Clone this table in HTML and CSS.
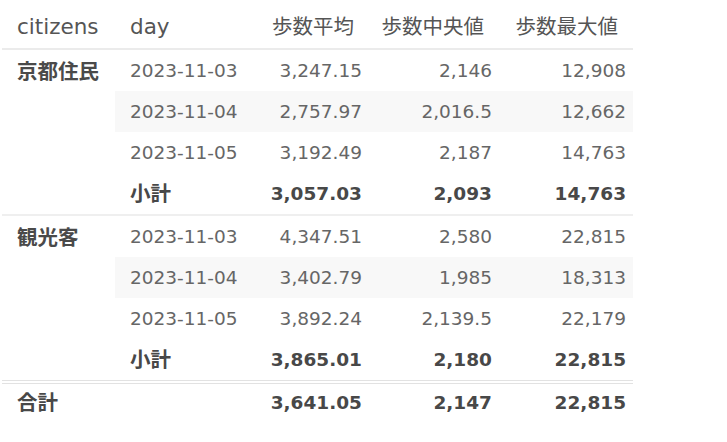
FILE: index.html
```html
<!DOCTYPE html>
<html lang="ja">
<head>
<meta charset="utf-8">
<title>歩数集計</title>
<link rel="stylesheet" href="styles.css">
</head>
<body>
<table class="summary">
  <colgroup>
    <col class="c-cit"><col class="c-day"><col class="c-avg"><col class="c-med"><col class="c-max">
  </colgroup>
  <thead>
    <tr>
      <th class="txt">citizens</th>
      <th class="txt">day</th>
      <th class="num"><span class="ja">歩数平均</span></th>
      <th class="num"><span class="ja">歩数中央値</span></th>
      <th class="num"><span class="ja">歩数最大値</span></th>
    </tr>
  </thead>
  <tbody class="group">
    <tr>
      <td class="grp" rowspan="4"><span class="ja">京都住民</span></td>
      <td>2023-11-03</td><td class="num">3,247.15</td><td class="num">2,146</td><td class="num">12,908</td>
    </tr>
    <tr class="stripe">
      <td>2023-11-04</td><td class="num">2,757.97</td><td class="num">2,016.5</td><td class="num">12,662</td>
    </tr>
    <tr>
      <td>2023-11-05</td><td class="num">3,192.49</td><td class="num">2,187</td><td class="num">14,763</td>
    </tr>
    <tr class="sub">
      <td><span class="ja">小計</span></td><td class="num">3,057.03</td><td class="num">2,093</td><td class="num">14,763</td>
    </tr>
  </tbody>
  <tbody class="group">
    <tr>
      <td class="grp" rowspan="4"><span class="ja">観光客</span></td>
      <td>2023-11-03</td><td class="num">4,347.51</td><td class="num">2,580</td><td class="num">22,815</td>
    </tr>
    <tr class="stripe">
      <td>2023-11-04</td><td class="num">3,402.79</td><td class="num">1,985</td><td class="num">18,313</td>
    </tr>
    <tr>
      <td>2023-11-05</td><td class="num">3,892.24</td><td class="num">2,139.5</td><td class="num">22,179</td>
    </tr>
    <tr class="sub">
      <td><span class="ja">小計</span></td><td class="num">3,865.01</td><td class="num">2,180</td><td class="num">22,815</td>
    </tr>
  </tbody>
  <tfoot>
    <tr class="total">
      <td class="tot-label"><span class="ja">合計</span></td>
      <td></td><td class="num">3,641.05</td><td class="num">2,147</td><td class="num">22,815</td>
    </tr>
  </tfoot>
</table>
</body>
</html>
```
FILE: styles.css
```css
html, body {
  margin: 0;
  background: #ffffff;
}
body {
  padding: 0 0 0 2px;
  font-family: "DejaVu Sans", "Noto Sans CJK JP", sans-serif;
  font-size: 18.5px;
  color: #666666;
}
.ja {
  font-family: "Noto Sans CJK JP", "DejaVu Sans", sans-serif;
  font-size: 20.5px;
}
.summary {
  border-collapse: collapse;
  table-layout: fixed;
  width: 631px;
}
.c-cit { width: 113px; }
.c-day { width: 135px; }
.c-avg { width: 119px; }
.c-med { width: 130px; }
.c-max { width: 134px; }

.summary th {
  height: 40px;
  padding: 0 0 8px 15px;
  vertical-align: bottom;
  font-weight: normal;
  font-size: 21.5px;
  color: #555555;
  text-align: left;
  border-bottom: 2px solid #ebebeb;
  line-height: 26px;
  white-space: nowrap;
}
.summary th.num {
  text-align: right;
  padding-left: 0;
  padding-right: 15px;
}
.summary td {
  height: 41px;
  padding: 0 7px 0 15px;
  line-height: 24px;
  vertical-align: middle;
  white-space: nowrap;
}
.summary td.num {
  text-align: right;
}
.summary td.grp {
  vertical-align: top;
  padding-top: 8px;
  font-weight: bold;
  color: #4a4a4a;
}
.stripe td {
  background: #f8f8f8;
}
.sub td {
  font-weight: bold;
  color: #484848;
}
.group + .group tr:first-child td {
  border-top: 2px solid #efefef;
}
.total td {
  height: 37px;
  border-top: 4px double #e2e2e2;
  font-weight: bold;
  color: #484848;
}
```
